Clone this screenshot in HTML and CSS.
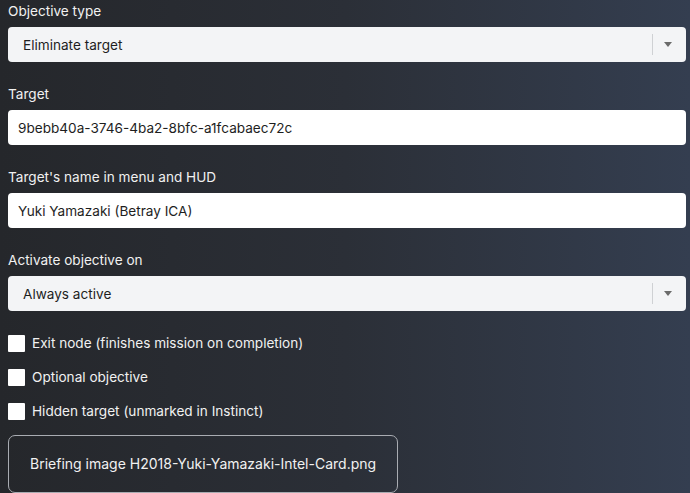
FILE: index.html
```html
<!DOCTYPE html>
<html lang="en">
<head>
  <meta charset="UTF-8" />
  <meta name="viewport" content="width=device-width, initial-scale=1.0"/>
  <title>Objective</title>
  <link rel="stylesheet" href="styles.css">
</head>
<body>
  <form class="objective">
    <label class="field-label">Objective type</label>
    <div class="select">
      <span class="select-value">Eliminate target</span>
      <span class="select-sep"></span>
      <span class="select-arrow"></span>
    </div>

    <label class="field-label">Target</label>
    <input class="text-input" type="text" value="9bebb40a-3746-4ba2-8bfc-a1fcabaec72c" />

    <label class="field-label">Target's name in menu and HUD</label>
    <input class="text-input" type="text" value="Yuki Yamazaki (Betray ICA)" />

    <label class="field-label">Activate objective on</label>
    <div class="select">
      <span class="select-value">Always active</span>
      <span class="select-sep"></span>
      <span class="select-arrow"></span>
    </div>

    <div class="checks">
      <label class="check"><span class="box"></span>Exit node (finishes mission on completion)</label>
      <label class="check"><span class="box"></span>Optional objective</label>
      <label class="check"><span class="box"></span>Hidden target (unmarked in Instinct)</label>
    </div>

    <button type="button" class="briefing">Briefing image H2018-Yuki-Yamazaki-Intel-Card.png</button>
  </form>
</body>
</html>
```

FILE: styles.css
```css
html, body {
  height: 100%;
}
body {
  margin: 0;
  font-family: Inter, 'Noto Sans', sans-serif;
  font-size: 13.6px;
  color: #f1f1f1;
  background: linear-gradient(90deg, #25272b 0%, #2b2f37 50%, #343e50 100%);
  overflow: hidden;
}
.objective {
  display: flex;
  flex-direction: column;
  padding: 0 4px 0 8px;
}
.field-label {
  display: block;
  font-size: 13.6px;
  line-height: 22px;
  margin-bottom: 5px;
}
.select, .text-input {
  box-sizing: border-box;
  height: 35px;
  border-radius: 4px;
  font-family: inherit;
  font-size: 13.6px;
  color: #1e1e1e;
  margin-bottom: 21px;
}
.select {
  display: flex;
  align-items: center;
  background: #f3f4f6;
  padding-left: 15px;
}
.select-value {
  flex: 1;
}
.select-sep {
  width: 1px;
  height: 21px;
  background: #cfd1d4;
}
.select-arrow {
  width: 0;
  height: 0;
  margin: 0 14px 0 11px;
  border-left: 4.5px solid transparent;
  border-right: 4.5px solid transparent;
  border-top: 5px solid #6b6b6b;
}
.text-input {
  width: 100%;
  border: none;
  background: #fff;
  padding: 0 10px;
  outline: none;
}
.checks {
  display: flex;
  flex-direction: column;
  gap: 16px;
  margin-top: 2px;
}
.check {
  display: flex;
  align-items: center;
  gap: 7px;
  font-size: 13.6px;
  line-height: 18px;
}
.box {
  width: 17px;
  height: 17px;
  background: #fff;
  border-radius: 1px;
}
.briefing {
  align-self: flex-start;
  margin-top: 15px;
  padding: 19px 21px;
  background: transparent;
  border: 1px solid #a9acb2;
  border-radius: 7px;
  color: #f1f1f1;
  font-family: inherit;
  font-size: 14px;
  line-height: 18px;
}
```
